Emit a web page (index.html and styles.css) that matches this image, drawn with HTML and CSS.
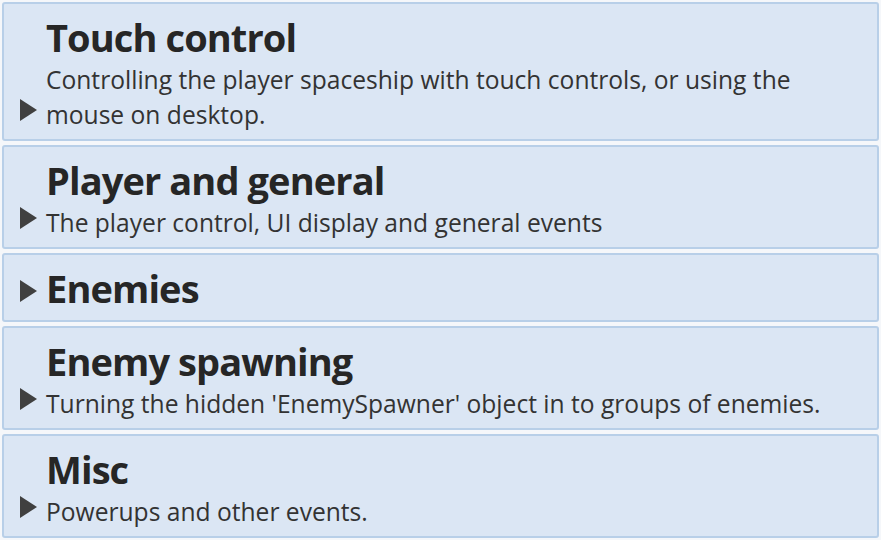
FILE: index.html
```html
<!DOCTYPE html>
<html>
<head>
<meta charset="utf-8">
<link rel="stylesheet" href="styles.css">
</head>
<body>
<div class="list">
  <div class="group">
    <div class="arrow"></div>
    <div class="content">
      <div class="title">Touch control</div>
      <div class="desc">Controlling the player spaceship with touch controls, or using the mouse on desktop.</div>
    </div>
  </div>
  <div class="group">
    <div class="arrow"></div>
    <div class="content">
      <div class="title">Player and general</div>
      <div class="desc">The player control, UI display and general events</div>
    </div>
  </div>
  <div class="group">
    <div class="arrow"></div>
    <div class="content">
      <div class="title">Enemies</div>
    </div>
  </div>
  <div class="group">
    <div class="arrow"></div>
    <div class="content">
      <div class="title">Enemy spawning</div>
      <div class="desc">Turning the hidden 'EnemySpawner' object in to groups of enemies.</div>
    </div>
  </div>
  <div class="group">
    <div class="arrow"></div>
    <div class="content">
      <div class="title">Misc</div>
      <div class="desc">Powerups and other events.</div>
    </div>
  </div>
</div>
</body>
</html>
```

FILE: styles.css
```css
html, body {
  margin: 0;
  padding: 0;
}
body {
  background: #f5f7fa;
  padding: 2px 2px;
  font-family: "Open Sans", "Noto Sans", sans-serif;
  color: #2b2b2b;
}
.list {
  display: flex;
  flex-direction: column;
  gap: 4px;
}
.group {
  display: flex;
  align-items: flex-end;
  background: #dbe6f4;
  border: 2px solid #b8cfe8;
  border-radius: 3px;
  padding: 8px 0 7px 0;
}
.arrow {
  flex: none;
  width: 0;
  height: 0;
  border-left: 17px solid #404040;
  border-top: 11px solid transparent;
  border-bottom: 11px solid transparent;
  margin: 0 9px 11px 16px;
}
.content {
  flex: 1;
  min-width: 0;
}
.title {
  font-size: 38px;
  font-weight: 700;
  letter-spacing: -0.9px;
  line-height: 50px;
  color: #262626;
}
.desc {
  font-size: 24.6px;
  line-height: 35px;
  color: #333333;
  padding-right: 30px;
}
```
